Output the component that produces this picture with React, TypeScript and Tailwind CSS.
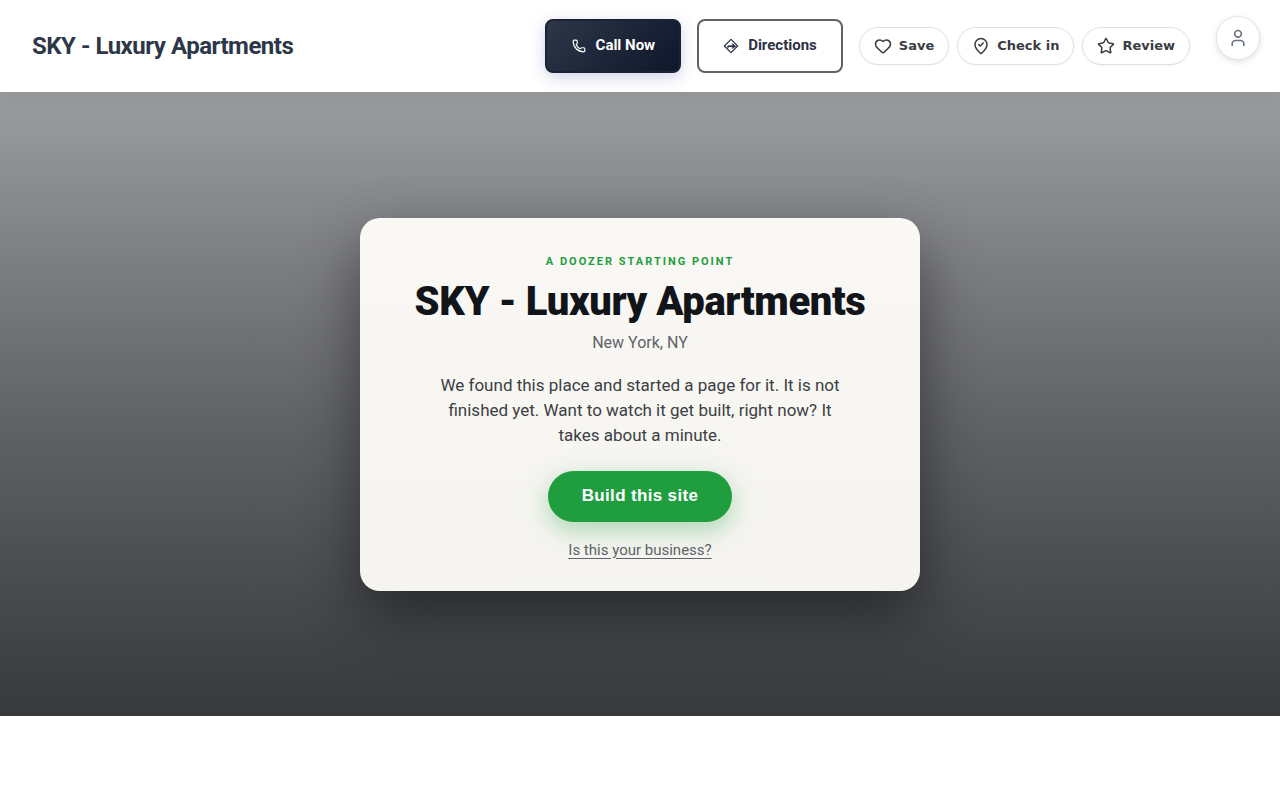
import { Heart, MapPinCheckInside, Phone, Star, User } from "lucide-react"

const actions = [
  { label: "Save", icon: Heart },
  { label: "Check in", icon: MapPinCheckInside },
  { label: "Review", icon: Star },
]

function DirectionsIcon() {
  return (
    <svg
      viewBox="0 0 24 24"
      className="size-4"
      fill="none"
      stroke="currentColor"
      strokeWidth="1.8"
      strokeLinejoin="round"
      strokeLinecap="round"
      aria-hidden="true"
    >
      <path d="M12 2 22 12 12 22 2 12Z" />
      <path d="M7.5 14.5v-1.8h10" />
      <path d="M7.5 12.2h9" />
      <path d="M14.5 8.8 19 12.5l-4.5 3Z" fill="currentColor" strokeWidth="1" />
    </svg>
  )
}

function Header() {
  return (
    <header className="relative z-10 flex items-center bg-white pl-8 pr-5 shadow-[0_4px_20px_rgba(0,0,0,0.08)]">
      <a href="#top" className="text-2xl font-bold tracking-[-0.02em] text-[#2d3748]">
        SKY - Luxury Apartments
      </a>

      <div className="ml-auto flex items-center gap-4 py-[19px]">
        <a
          href="tel:"
          className="flex h-[54px] items-center gap-[9px] rounded-lg border-2 border-[#1a2233] bg-linear-135 from-[#2d3748] to-[#0f172a] px-6 text-[15px] font-bold text-white shadow-[0_4px_15px_rgba(70,70,170,0.25)]"
        >
          <Phone className="size-4 p-px" strokeWidth={2} aria-hidden="true" />
          <span className="pb-0.5">Call Now</span>
        </a>
        <a
          href="#directions"
          className="flex h-[54px] items-center gap-[9px] rounded-lg border-2 border-[#5f6368] px-6 text-[15px] font-bold text-[#2d3142]"
        >
          <DirectionsIcon />
          <span className="pb-0.5">Directions</span>
        </a>

        <div className="flex gap-2 font-['DejaVu_Sans',sans-serif]">
          {actions.map(({ label, icon: Icon }) => (
            <button
              key={label}
              type="button"
              className="flex h-[38px] items-center gap-[7px] rounded-full border border-[#dfe0e3] bg-white px-3.5 text-[13px] font-bold text-[#3a3c42] shadow-[0_1px_2px_rgba(0,0,0,0.04)]"
            >
              <Icon className="size-[18px]" strokeWidth={2} aria-hidden="true" />
              {label}
            </button>
          ))}
        </div>
      </div>

      <button
        type="button"
        aria-label="Account"
        className="ml-[26px] mt-4 flex size-11 items-center justify-center self-start rounded-full border border-[#e5e5e7] bg-white text-[#6b7280] shadow-[0_2px_6px_rgba(0,0,0,0.12)]"
      >
        <User className="size-5" strokeWidth={2} aria-hidden="true" />
      </button>
    </header>
  )
}

function StartCard() {
  return (
    <div className="flex w-full max-w-[560px] flex-col items-center rounded-[20px] bg-linear-to-b from-[#f9f8f4] to-[#f5f4f0] px-10 pb-[29px] pt-9 text-center shadow-[0_24px_60px_rgba(0,0,0,0.45)]">
      <p className="text-[11px] font-bold uppercase leading-4 tracking-[2px] text-[#1f9d3f]">
        A Doozer starting point
      </p>
      <h1 className="mt-2 text-[40px] font-black leading-12 tracking-[-0.01em] text-[#111418]">
        SKY - Luxury Apartments
      </h1>
      <p className="mt-[5px] text-base text-[#5f6368]">New York, NY</p>
      <p className="mt-[18px] max-w-[400px] text-[17px] leading-[25px] text-[#3c4043]">
        We found this place and started a page for it. It is not finished yet. Want to watch it get
        built, right now? It takes about a minute.
      </p>
      <button
        type="button"
        className="mt-[23px] h-[51px] rounded-full bg-[#1f9d3f] px-[34px] font-['Liberation_Sans',sans-serif] text-[17px] font-bold tracking-[0.02em] text-white shadow-[0_8px_24px_rgba(31,157,63,0.35)]"
      >
        Build this site
      </button>
      <a href="#claim" className="mt-4 text-[15px] leading-6 text-[#5f6368] underline underline-offset-3">
        Is this your business?
      </a>
    </div>
  )
}

export default function App() {
  return (
    <div id="top" className="min-h-screen bg-white font-[Roboto,sans-serif]">
      <Header />
      <main className="flex min-h-[78vh] items-center justify-center overflow-hidden bg-linear-to-b from-[#9c9d9f] via-[#636569] to-[#37393b] px-4">
        <StartCard />
      </main>
    </div>
  )
}
